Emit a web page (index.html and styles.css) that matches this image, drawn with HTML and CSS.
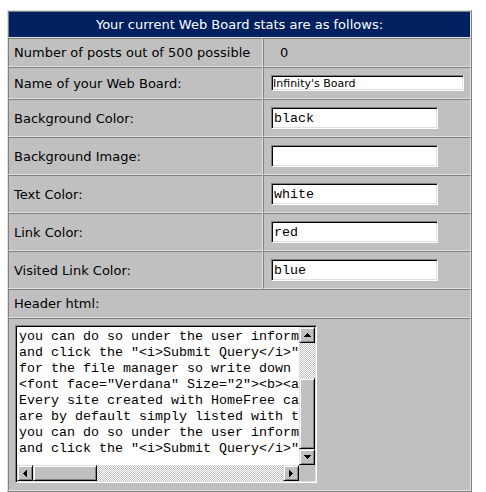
FILE: index.html
```html
<!DOCTYPE html>
<html lang="en">
<head>
    <meta charset="UTF-8">
    <meta name="viewport" content="width=device-width, initial-scale=1.0">
    <title>Web Board Stats</title>
    <link rel="stylesheet" href="styles.css">
</head>
<body>
    <form class="board">
        <div class="cell head">Your current Web Board stats are as follows:</div>

        <div class="cell r-posts">Number of posts out of 500 possible</div>
        <div class="cell r-posts count">0</div>

        <div class="cell r-name">Name of your Web Board:</div>
        <div class="cell r-name value"><input class="field name" type="text" value="Infinity's Board"></div>

        <div class="cell r-field">Background Color:</div>
        <div class="cell r-field value"><input class="field color" type="text" value="black"></div>

        <div class="cell r-field">Background Image:</div>
        <div class="cell r-field value"><input class="field color" type="text" value=""></div>

        <div class="cell r-field">Text Color:</div>
        <div class="cell r-field value"><input class="field color" type="text" value="white"></div>

        <div class="cell r-field">Link Color:</div>
        <div class="cell r-field value"><input class="field color" type="text" value="red"></div>

        <div class="cell r-field">Visited Link Color:</div>
        <div class="cell r-field value"><input class="field color" type="text" value="blue"></div>

        <div class="cell r-html wide">Header html:</div>

        <div class="cell r-area wide">
            <div class="textbox">
                <textarea class="source" wrap="off" readonly>you can do so under the user information section
and click the "&lt;i&gt;Submit Query&lt;/i&gt;" button below
for the file manager so write down your password
&lt;font face="Verdana" Size="2"&gt;&lt;b&gt;&lt;a href="index.html"&gt;
Every site created with HomeFree can have a board
are by default simply listed with their names
you can do so under the user information section
and click the "&lt;i&gt;Submit Query&lt;/i&gt;" button below</textarea>
                <div class="vscroll">
                    <div class="btn">
                        <svg width="7" height="4" viewBox="0 0 7 4"><path d="M3 0h1v1h1v1h1v1h1v1H0V3h1V2h1V1h1z" fill="#000"/></svg>
                    </div>
                    <div class="track vtrack"></div>
                    <div class="btn thumb vthumb"></div>
                    <div class="btn">
                        <svg width="7" height="4" viewBox="0 0 7 4"><path d="M0 0h7v1H6v1H5v1H4v1H3V3H2V2H1V1H0z" fill="#000"/></svg>
                    </div>
                </div>
                <div class="hscroll">
                    <div class="btn">
                        <svg width="4" height="7" viewBox="0 0 4 7"><path d="M3 0h1v7H3V6H2V5H1V4H0V3h1V2h1V1h1z" fill="#000"/></svg>
                    </div>
                    <div class="btn thumb hthumb"></div>
                    <div class="track htrack"></div>
                    <div class="btn">
                        <svg width="4" height="7" viewBox="0 0 4 7"><path d="M0 0h1v1h1v1h1v1h1v1H3v1H2v1H1v1H0z" fill="#000"/></svg>
                    </div>
                </div>
                <div class="corner"></div>
            </div>
        </div>
    </form>
</body>
</html>
```

FILE: styles.css
```css
body {
    margin: 0;
    background-color: #ffffff;
    color: #000000;
    font-family: "DejaVu Sans", Verdana, sans-serif;
    font-size: 13px;
}

.board {
    display: grid;
    grid-template-columns: 255px 208px;
    width: 463px;
    margin: 10px 0 0 7px;
    border: 1px solid;
    border-color: #dfdfdf #808080 #808080 #dfdfdf;
    background-color: #c0c0c0;
}

.cell {
    box-sizing: border-box;
    display: flex;
    align-items: center;
    padding: 0 5px;
    border: 1px solid;
    border-color: #808080 #dfdfdf #dfdfdf #808080;
    white-space: nowrap;
}

.head {
    grid-column: 1 / 3;
    height: 27px;
    justify-content: center;
    background-color: #00205f;
    color: #ffffff;
}

.wide {
    grid-column: 1 / 3;
}

.r-posts {
    height: 29px;
}

.r-name {
    height: 32px;
}

.r-field {
    height: 38px;
}

.r-html {
    height: 29px;
}

.r-area {
    height: 173px;
    align-items: flex-start;
    padding: 6px;
}

.count {
    padding-left: 16px;
}

.value {
    padding-left: 7px;
}

.field {
    box-sizing: border-box;
    margin: 0;
    padding: 0 2px;
    border: 1px solid;
    border-color: #808080 #ffffff #ffffff #808080;
    box-shadow: inset 1px 1px #000000, inset -1px -1px #dfdfdf;
    background-color: #ffffff;
    color: #000000;
    outline: none;
}

.name {
    width: 193px;
    height: 16px;
    padding: 0 1px;
    font-family: "DejaVu Sans", Verdana, sans-serif;
    font-size: 11px;
}

.color {
    width: 167px;
    height: 22px;
    font-family: "Liberation Mono", "Courier New", monospace;
    font-size: 13.33px;
}

.textbox {
    box-sizing: border-box;
    display: grid;
    grid-template-columns: 1fr 16px;
    grid-template-rows: 1fr 16px;
    width: 302px;
    height: 158px;
    border: 1px solid;
    border-color: #808080 #ffffff #ffffff #808080;
    background-color: #ffffff;
    padding: 1px;
    box-shadow: inset 1px 1px #000000, inset -1px -1px #dfdfdf;
}

.source {
    box-sizing: border-box;
    display: block;
    width: 100%;
    height: 100%;
    margin: 0;
    padding: 2px 2px;
    border: none;
    resize: none;
    overflow: hidden;
    outline: none;
    background: transparent;
    color: #000000;
    font-family: "Liberation Mono", "Courier New", monospace;
    font-size: 13.33px;
    line-height: 16px;
    white-space: pre;
}

.vscroll {
    display: flex;
    flex-direction: column;
}

.hscroll {
    display: flex;
}

.btn {
    box-sizing: border-box;
    display: flex;
    align-items: center;
    justify-content: center;
    width: 16px;
    height: 16px;
    flex: none;
    background-color: #c0c0c0;
    border: 1px solid;
    border-color: #dfdfdf #000000 #000000 #dfdfdf;
    box-shadow: inset 1px 1px #ffffff, inset -1px -1px #808080;
}

.vthumb {
    height: 71px;
}

.hthumb {
    width: 64px;
}

.track {
    flex: 1;
    background: repeating-conic-gradient(#c0c0c0 0 25%, #ffffff 0 50%) 0 0 / 2px 2px;
}

.corner {
    background-color: #c0c0c0;
}
```
